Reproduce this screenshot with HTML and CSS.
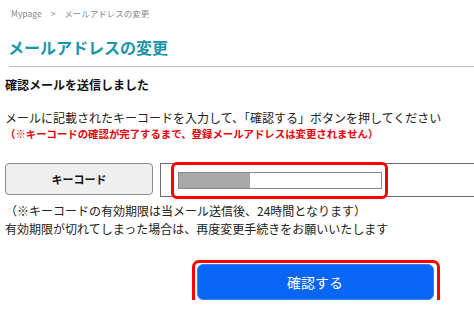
FILE: index.html
```html
<!DOCTYPE html>
<html lang="ja">
<head>
<meta charset="utf-8">
<link rel="stylesheet" href="styles.css">
</head>
<body>
<div class="page">
  <div class="breadcrumb"><span>Mypage</span><span class="sep">&gt;</span><span>メールアドレスの変更</span></div>
  <h1 class="title">メールアドレスの変更</h1>
  <div class="rule"></div>
  <h2 class="subtitle">確認メールを送信しました</h2>
  <p class="lead">メールに記載されたキーコードを入力して、「確認する」ボタンを押してください</p>
  <p class="warn">（※キーコードの確認が完了するまで、登録メールアドレスは変更されません）</p>
  <div class="row">
    <div class="label">キーコード</div>
    <div class="field">
      <div class="input"><div class="input-fill"></div></div>
      <div class="mark mark-input"></div>
    </div>
  </div>
  <div class="notes">
    <p class="note">（※キーコードの有効期限は当メール送信後、24時間となります）</p>
    <p class="note">有効期限が切れてしまった場合は、再度変更手続きをお願いいたします</p>
  </div>
  <div class="actions">
    <div class="btn-wrap">
      <button class="btn">確認する</button>
      <div class="mark mark-btn"></div>
    </div>
  </div>
</div>
</body>
</html>
```
FILE: styles.css
```css
html, body {
  margin: 0;
  padding: 0;
  overflow: hidden;
  background: #fff;
}
body {
  font-family: "Noto Sans CJK JP", "Noto Sans", sans-serif;
  color: #222;
}
.page {
  width: 620px;
  padding-left: 5px;
}
.breadcrumb {
  padding: 7px 0 0 6px;
  font-size: 8.5px;
  line-height: 12px;
  color: #8a8a8a;
}
.breadcrumb .sep {
  margin: 0 9px 0 9px;
}
.title {
  margin: 17px 0 0 3px;
  font-size: 16px;
  line-height: 22px;
  font-weight: bold;
  color: #1896aa;
}
.rule {
  margin: 8px 0 0 4px;
  border-top: 1px solid #bdbdbd;
}
.subtitle {
  margin: 9px 0 0 0;
  font-size: 12px;
  line-height: 18px;
  font-weight: bold;
  color: #111;
}
.lead {
  margin: 15px 0 0 0;
  font-size: 12px;
  line-height: 18px;
  color: #222;
}
.warn {
  margin: 0;
  font-size: 10.4px;
  line-height: 14px;
  font-weight: bold;
  color: #e8000b;
}
.row {
  display: flex;
  align-items: flex-start;
  gap: 7px;
  margin-top: 22px;
}
.label {
  box-sizing: border-box;
  width: 148px;
  height: 32px;
  border: 1px solid #8c8c8c;
  border-radius: 4px;
  background: #efefef;
  display: flex;
  align-items: center;
  justify-content: center;
  font-size: 11px;
  font-weight: bold;
  color: #111;
}
.field {
  position: relative;
  box-sizing: border-box;
  flex: 1;
  height: 34px;
  border: 1px solid #6a6a6a;
  padding: 8px 0 0 17px;
}
.input {
  box-sizing: border-box;
  width: 204px;
  height: 17px;
  border: 1px solid #8a8a8a;
  background: #fff;
}
.input-fill {
  width: 71px;
  height: 100%;
  background: #a8a8a8;
}
.mark {
  position: absolute;
  box-sizing: border-box;
  border: 3px solid #ff0000;
  border-radius: 6px;
}
.mark-input {
  left: 10px;
  top: -2px;
  width: 217px;
  height: 37px;
}
.notes {
  margin-top: 5px;
}
.note {
  margin: 0;
  font-size: 12px;
  line-height: 18px;
  color: #222;
}
.actions {
  display: flex;
  justify-content: center;
  margin-top: 26px;
}
.btn-wrap {
  position: relative;
}
.btn {
  display: block;
  width: 237px;
  height: 36px;
  border: 1px solid #3b82f0;
  border-radius: 6px;
  background: #0866f6;
  color: #fff;
  font-family: "Noto Sans CJK JP", "Noto Sans", sans-serif;
  font-size: 14px;
  padding: 0;
}
.mark-btn {
  left: -5px;
  top: -4px;
  right: -6px;
  bottom: -6px;
  border-radius: 7px;
}
```
